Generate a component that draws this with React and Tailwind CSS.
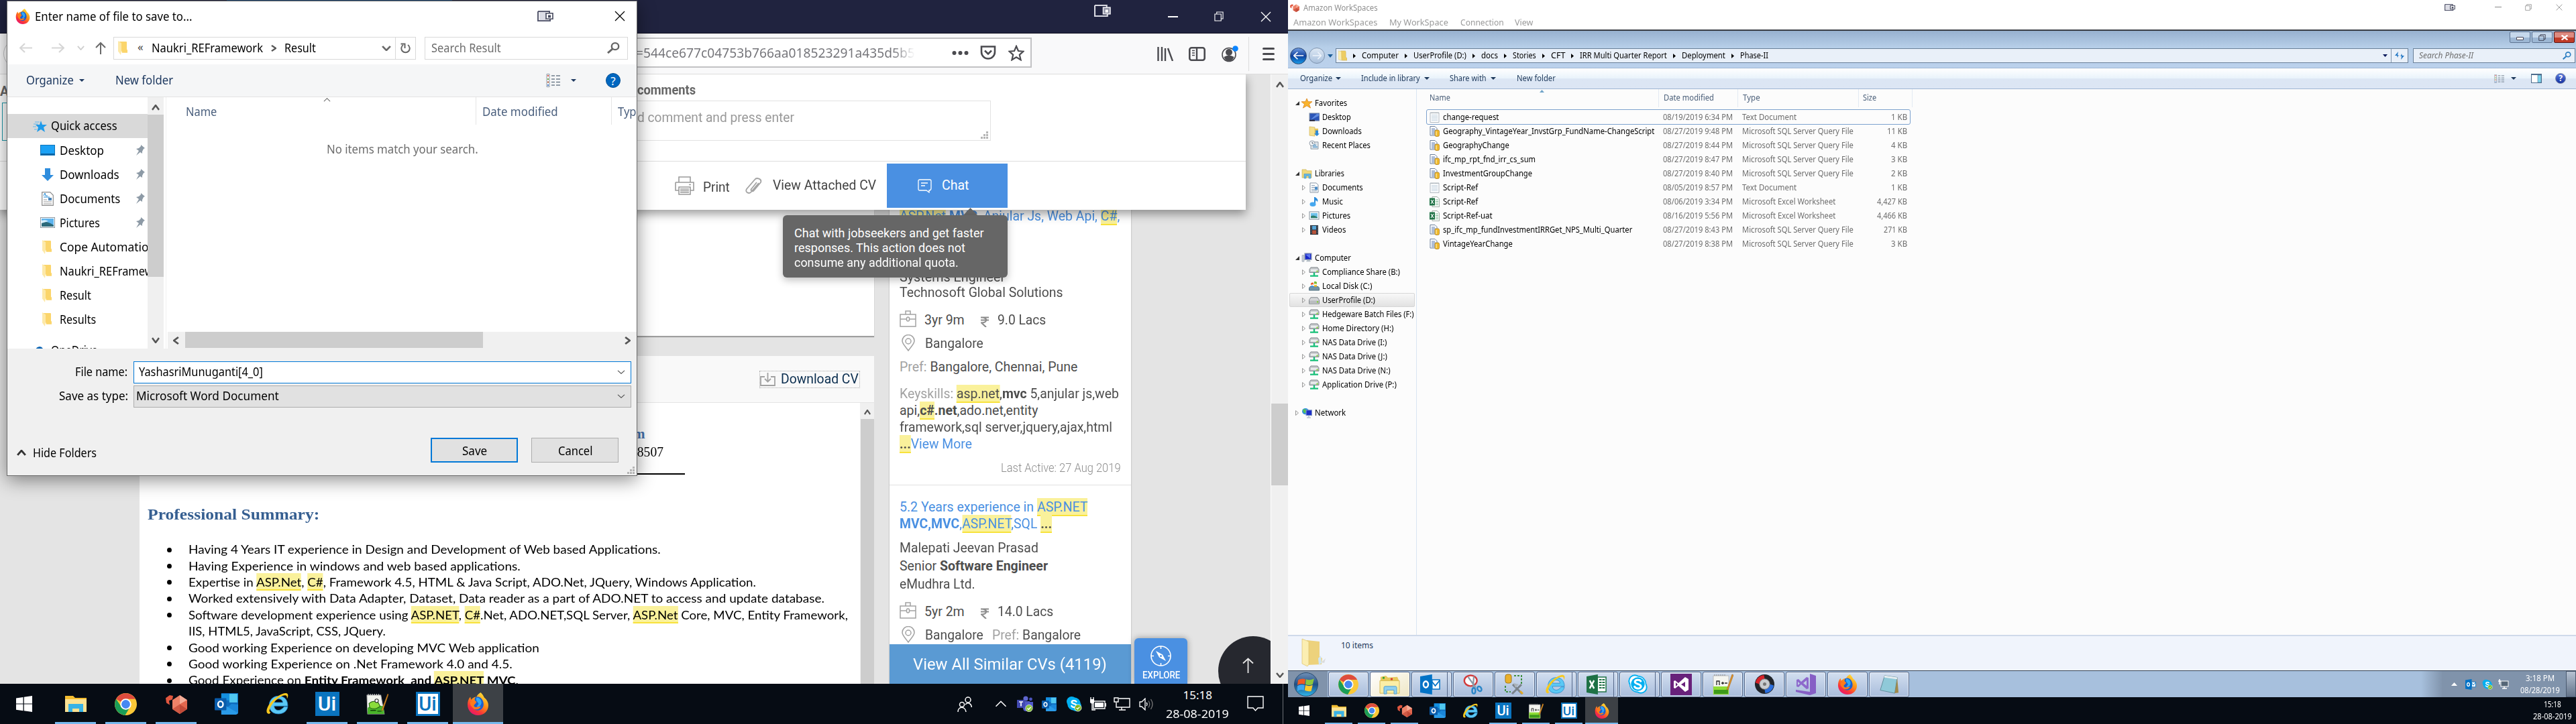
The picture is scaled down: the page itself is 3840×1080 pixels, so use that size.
import { useLayoutEffect, useRef, useState } from "react";

const SEGOE = "font-['Noto_Sans','Open_Sans',sans-serif]";
const ROBOTO = "font-['Roboto',sans-serif]";

/* Text that is condensed or widened to fill a known width. */
function Fit({ w, className = "", origin = "origin-left", children }) {
  const ref = useRef(null);
  const [k, setK] = useState(1);
  useLayoutEffect(() => {
    if (ref.current.offsetWidth) setK(w / ref.current.offsetWidth);
  }, [w, children]);
  return (
    <span className={`block shrink-0 whitespace-nowrap ${className}`} style={{ width: w }}>
      <span ref={ref} className={`inline-block whitespace-pre ${origin}`} style={{ transform: `scaleX(${k})` }}>
        {children}
      </span>
    </span>
  );
}

/* ---------- icons ---------- */
const Svg = ({ c, vb = "0 0 24 24", children }) => (
  <svg viewBox={vb} preserveAspectRatio="none" className={`block shrink-0 ${c}`} fill="none">
    {children}
  </svg>
);
const Firefox = ({ c }) => (
  <Svg c={c} vb="0 0 32 32">
    <defs>
      <linearGradient id="ffx" x1="0.8" y1="0" x2="0.2" y2="1">
        <stop offset="0" stopColor="#ffe83b" />
        <stop offset="0.45" stopColor="#ff8a16" />
        <stop offset="0.75" stopColor="#f8333a" />
        <stop offset="1" stopColor="#e3127a" />
      </linearGradient>
    </defs>
    <path d="M20 0c3 3 4 5 5 7 4 3 6 7 6 11 0 8-7 14-15 14S1 26 1 17c0-4 1-8 4-11l1 4c3-3 5-4 8-4 1-3 4-5 6-6z" fill="url(#ffx)" />
    <path d="M12 7c5-3 11 1 12 8s-5 11-10 10-7-6-4-9c1-1 4-1 4-3-2-1-4-3-2-6z" fill="#1a5fd0" />
    <path d="M14 7c4 0 7 3 7 7s-4 7-7 6l3-4c-1-3-5-4-3-9z" fill="#2fa8f5" />
    <path d="M5 13c3-1 6 0 8 2-2 2-4 3-2 5 3 2 6-1 9 0-2 4-8 5-11 2S4 17 5 13z" fill="#ff7a1a" />
  </Svg>
);
const Chrome = ({ c }) => (
  <Svg c={c} vb="0 0 32 32">
    <circle cx="16" cy="16" r="16" fill="#fbc837" />
    <path d="M2 8.5A16 16 0 0 1 30 8.5H16a8 8 0 0 0-7 4z" fill="#dd4b3e" />
    <path d="M2 8.5a16 16 0 0 0 13 23.4L22 20a8 8 0 0 1-13-1z" fill="#1a9d58" />
    <circle cx="16" cy="16" r="8" fill="#fff" />
    <circle cx="16" cy="16" r="6.2" fill="#4688f1" />
  </Svg>
);
const Explorer = ({ c }) => (
  <Svg c={c} vb="0 0 32 26">
    <path d="M0 1h12l3 3h17v20H0z" fill="#f3bd30" />
    <path d="M0 6h32v19H0z" fill="#fde293" />
    <path d="M5 25V13h22v12h-6v-5H11v5z" fill="#39b2e6" />
  </Svg>
);
const Explorer7 = ({ c }) => (
  <Svg c={c} vb="0 0 32 32">
    <path d="M2 4l8-2 3 3 14-1 2 5v20H2z" fill="#e8c95c" />
    <path d="M1 10h29v20H1z" fill="#fbeea6" stroke="#d6b851" />
    <path d="M7 31V21q0-2 2-2h15q2 0 2 2v10h-4v-6H11v6z" fill="#8fd0ef" stroke="#559fc9" />
    <rect x="5" y="4" width="3" height="3" fill="#35a335" />
    <rect x="17" y="6" width="3" height="3" fill="#d33" />
  </Svg>
);
const Cubes = ({ c }) => (
  <Svg c={c} vb="0 0 32 28">
    <path d="M0 5l6-4 5 1-1 5-5 2 1 6-5-3z" fill="#e2573f" />
    <path d="M21 1l11 7v13l-11 7-11-7V8z" fill="#ee8268" />
    <path d="M21 1l11 7-11 6z" fill="#f4ad98" />
    <path d="M21 14l11-6v13z" fill="#e2674e" />
    <path d="M21 14v14l-11-7z" fill="#d05a45" />
    <path d="M21 14l11 7-11 7z" fill="#c14a38" />
  </Svg>
);
const Outlook = ({ c }) => (
  <Svg c={c} vb="0 0 32 30">
    <path d="M9 0h23v26q0 3-3 3H9z" fill="#0f6cbd" />
    <path d="M9 1h11v9H9z" fill="#1490df" />
    <path d="M20 1h11v12H20z" fill="#50c8f0" />
    <path d="M9 27l14-12 9 1v12z" fill="#1a86d9" />
    <path d="M9 14l23 14q-1 2-3 2H9z" fill="#2a9be8" />
    <rect x="0" y="7" width="16" height="17" rx="1" fill="#0a5cab" />
    <ellipse cx="8" cy="15.5" rx="3.4" ry="4.2" stroke="#fff" strokeWidth="2.2" />
  </Svg>
);
const Outlook13 = ({ c }) => (
  <Svg c={c} vb="0 0 32 30">
    <path d="M0 3l19-3v30L0 27z" fill="#0072c6" />
    <ellipse cx="9" cy="15" rx="3.8" ry="4.6" stroke="#fff" strokeWidth="2.6" />
    <path d="M19 8h12v14H19z" fill="#fff" stroke="#0072c6" strokeWidth="1.6" />
    <path d="M19 11l5 6 7-8" stroke="#0072c6" strokeWidth="1.8" />
  </Svg>
);
const IE = ({ c }) => (
  <Svg c={c} vb="0 0 32 32">
    <path d="M26 20h5c-1 6-6 10-13 10C10 30 5 25 5 18S10 5 18 5c8 0 13 5 13 14H12c0 4 3 6 6 6s5-2 8-5zM12 14h12c0-3-3-5-6-5s-5 2-6 5z" fill="#5ac8f5" stroke="#2585c9" strokeWidth="0.8" />
    <path d="M5 30c-6 0-4-9 2-16S24 0 29 1c4 1 2 6 1 8 0-3 0-5-3-5-5 0-13 6-18 13-4 6-5 10-2 11z" fill="#f7c81e" />
  </Svg>
);
const Npp = ({ c }) => (
  <Svg c={c} vb="0 0 32 32">
    <path d="M2 3h23v28H2z" fill="#f5f5f0" stroke="#bbb" />
    <path d="M2 19h23v12H2z" fill="#8fdc35" />
    <path d="M3 24h21v6H3z" fill="#3d9a1b" />
    <path d="M4 3v-2m3 2v-2m3 2v-2m3 2v-2m3 2v-2m3 2v-2" stroke="#888" />
    <path d="M7 17v-6h4v6m3-3h4m-2-2v4m3-2h4" stroke="#222" strokeWidth="1.3" />
    <path d="M22 24L30 1l2 1-8 22z" fill="#e59a2c" stroke="#9a5b12" strokeWidth="0.6" />
  </Svg>
);
const NppFrog = ({ c }) => (
  <Svg c={c} vb="0 0 32 32">
    <path d="M1 3h20l5 27H2z" fill="#f2f4ee" stroke="#bbb" />
    <path d="M3 3v-2m3 2v-2m3 2v-2m3 2v-2m3 2v-2m3 2v-2" stroke="#ccc" />
    <path d="M2 21q10-5 23-2l1 11H2z" fill="#49b32a" />
    <path d="M4 15q5-5 13-2l3 6q-8 6-15 2z" fill="#8bdc3c" stroke="#215d10" />
    <circle cx="15" cy="11" r="2.5" fill="#fff" stroke="#222" />
    <path d="M6 25h8m2 1h6" stroke="#144408" strokeWidth="1.3" />
    <path d="M22 25L31 1l1 1-8 23z" fill="#e59a2c" stroke="#9a5b12" strokeWidth="0.6" />
  </Svg>
);
const WinLogo = ({ c }) => (
  <Svg c={c}>
    <path d="M0 3.4l10.5-1.5v9.6H0zM11.8 1.7L24 0v11.5H11.8zM0 12.6h10.5v9.6L0 20.7zM11.8 12.6H24V24l-12.2-1.7z" fill="#fff" />
  </Svg>
);
const Skype = ({ c, badge, ring }) => (
  <Svg c={c}>
    <circle cx="8.5" cy="8.5" r="7.5" fill="#00aff0" />
    <circle cx="15.500" cy="15.500" r="7.500" fill="#00aff0" />
    <circle cx="12" cy="12" r="9.8" fill="#00aff0" />
    {ring && <><circle cx="8.500" cy="8.500" r="6" fill="#fff" /><circle cx="15.500" cy="15.500" r="6" fill="#fff" /><circle cx="12" cy="12" r="8.600" fill="#fff" /><circle cx="12" cy="12" r="7.900" fill="#00aff0" /></>}
    <path d="M15.4 8.600C14 6.600 8.800 6.600 8.600 9.300c0 3.200 7.200 2 7 5.500-.4 3-6 2.900-7.300.2" stroke="#fff" strokeWidth="2.300" strokeLinecap="round" />
    {badge && <circle cx="18" cy="18" r="5" fill="#7ab51d" stroke="#fff" strokeWidth="0.8" />}
    {badge && <path d="M15.6 18l1.8 1.8 3-3.4" stroke="#fff" strokeWidth="1.3" />}
  </Svg>
);
const Teams = ({ c }) => (
  <Svg c={c}>
    <circle cx="13" cy="4" r="3.6" fill="#5f66cf" />
    <circle cx="20.5" cy="5" r="2.4" fill="#4b53bc" />
    <path d="M9 8h10v10q-1 5-6 5c-3 0-4-3-4-6zM18 9h6v7q-1 3-5 3z" fill="#5059c9" />
    <rect y="6" width="12" height="12" fill="#4149b0" />
    <path d="M3 9h6M6 9v6.5" stroke="#fff" strokeWidth="1.7" />
    <circle cx="18" cy="18.5" r="5.2" fill="#8bc540" stroke="#fff" strokeWidth="0.6" />
    <path d="M15.5 18.6l1.8 1.8 3.3-3.6" stroke="#fff" strokeWidth="1.4" />
  </Svg>
);
const Folder = ({ c }) => (
  <Svg c={c} vb="0 0 14 20">
    <path d="M1 1h11q1 0 1 1v10l1 1v4H6z" fill="#fbd56b" />
    <path d="M0 0l5 3v11l-1 6-3-4-1-1z" fill="#fde9a9" />
  </Svg>
);
const Folder7 = ({ c }) => (
  <Svg c={c} vb="0 0 14 18">
    <path d="M4 1h7q1 0 1 2v9l2 1v4H6z" fill="#edcd63" stroke="#cfa93c" strokeWidth="0.5" />
    <path d="M0 1l5 1v15l-5-2z" fill="#fbeeb0" stroke="#d9bd62" strokeWidth="0.5" />
  </Svg>
);
const Pin = () => (
  <Svg c="w-[15px] h-[16px]" vb="0 0 15 16">
    <path d="M9 0l6 5-2 1-2 4 0 3-3-2-6 5 4-7-4-3 4-1 3-3z" fill="#8d9aa6" />
  </Svg>
);
const Caret = ({ c, d = "down", sw = 2.5 }) => (
  <Svg c={c} vb="0 0 12 8">
    <path d={d === "down" ? "M1 1l5 6 5-6" : "M1 7l5-6 5 6"} stroke="currentColor" strokeWidth={sw} />
  </Svg>
);
const SideCaret = ({ c, d = "right", sw = 2.5 }) => (
  <Svg c={c} vb="0 0 8 12">
    <path d={d === "right" ? "M1 1l6 5-6 5" : "M7 1L1 6l6 5"} stroke="currentColor" strokeWidth={sw} />
  </Svg>
);
const Tri = ({ c, d = "down" }) => (
  <Svg c={c} vb="0 0 10 10">
    <path d={d === "down" ? "M0 0h10L5 10z" : d === "up" ? "M0 10h10L5 0z" : "M0 0l10 5-10 5z"} fill="currentColor" />
  </Svg>
);
const Screens = ({ c, dark }) => (
  <Svg c={c} vb="0 0 24 17">
    <path d="M1 1h17v4M1 1v15h18v-3" stroke={dark ? "#55586e" : "#d9dae2"} strokeWidth="2" />
    {dark && <path d="M3 2h10v13H3z" fill="#dcdde6" />}
    <rect x="13" y="4" width="10" height="9" fill={dark ? "#fff" : "#8e90a2"} stroke={dark ? "#44475c" : "#e8e8ee"} strokeWidth="1.6" />
    <rect x="16" y="7" width="4" height="4" fill={dark ? "#44475c" : "#fff"} />
  </Svg>
);
const Cross = ({ c, sw = 1.4 }) => (
  <Svg c={c} vb="0 0 16 16">
    <path d="M1 1l14 14M15 1L1 15" stroke="currentColor" strokeWidth={sw} />
  </Svg>
);
const Restore = ({ c }) => (
  <Svg c={c} vb="0 0 15 15">
    <path d="M1 4h10v10H1zM4 4V1h10v10h-3" stroke="currentColor" strokeWidth="1.2" />
  </Svg>
);
const Arrow = ({ c, r = "" }) => (
  <Svg c={`${c} ${r}`} vb="0 0 20 16">
    <path d="M19 8H1M8 1L1 8l7 7" stroke="currentColor" strokeWidth="2.2" />
  </Svg>
);
const Magnifier = ({ c }) => (
  <Svg c={c} vb="0 0 19 18">
    <circle cx="12" cy="6.5" r="5.2" stroke="currentColor" strokeWidth="2.4" />
    <path d="M8 10.5L1 17" stroke="currentColor" strokeWidth="3" />
  </Svg>
);
const ListIcon = ({ c }) => (
  <Svg c={c} vb="0 0 21 20">
    <path d="M1 .5h4v19H1z" fill="#fff" stroke="#8a98a5" />
    <path d="M8 3h5m2 0h6M8 8h5m2 0h6M8 12.500h5m2 0h6M8 17h5m2 0h6" stroke="#6f7e8c" strokeWidth="1.4" />
    <path d="M2 3h2" stroke="#e2574c" strokeWidth="2" />
    <path d="M2 8h2" stroke="#6aaa3e" strokeWidth="2" />
    <path d="M2 12.500h2" stroke="#b53" strokeWidth="2" />
    <path d="M2 17h2" stroke="#47c" strokeWidth="2" />
  </Svg>
);
const Grip = ({ c }) => (
  <Svg c={c} vb="0 0 11 11">
    <path d="M8 0h3v3H8zM4 4h3v3H4zM8 4h3v3H8zM0 8h3v3H0zM4 8h3v3H4zM8 8h3v3H8z" fill="#b5b5b5" />
  </Svg>
);
const Briefcase = () => (
  <Svg c="w-[25px] h-[25px] -mt-[5px]" vb="0 0 25 25">
    <path d="M1 6h23v18H1zM1 13h23M9 6V1h7v5" stroke="#a2a2a2" strokeWidth="1.5" />
    <rect x="10.500" y="10" width="4" height="6" rx="2" fill="#fff" stroke="#a2a2a2" strokeWidth="1.5" />
  </Svg>
);
const MapPin = () => (
  <Svg c="w-[20px] h-[25px] -mt-[3px]" vb="0 0 20 25">
    <path d="M10 24C6 18 1 14 1 9.500a9 9 0 0 1 18 0C19 14 14 18 10 24z" stroke="#a2a2a2" strokeWidth="1.500" />
    <circle cx="10" cy="10" r="4" stroke="#a2a2a2" strokeWidth="1.500" />
  </Svg>
);
const Rupee = () => (
  <Svg c="w-[12px] h-[16px] mt-[3px]" vb="0 0 12 16">
    <path d="M0 1.500h12M0 5.500h12M1 1.500c10 0 9 8 0 8l7 6.500" stroke="#8c8c8c" strokeWidth="2.200" />
  </Svg>
);

const UiTile = ({ c, light }) => (
  <div className={`flex shrink-0 items-center justify-center font-['Roboto'] font-medium leading-none ${light ? "border-[#0a74bf] bg-white text-[#0a74bf]" : "border-[#0a74bf] bg-[#0a74bf] text-white"} ${c}`}>
    Ui
  </div>
);

/* ---------- save dialog ---------- */
const quick = [
  ["Desktop", 66, "desktop"], ["Downloads", 89, "down"], ["Documents", 90, "doc"], ["Pictures", 60, "pic"],
  ["Cope Automation", 143], ["Naukri_REFramework", 165], ["Result", 47], ["Results", 54],
];
function QuickIcon({ kind }) {
  if (kind === "desktop") return <Svg c="w-[22px] h-[16px]" vb="0 0 22 16"><rect x=".5" y=".5" width="21" height="15" fill="#1ba1f5" stroke="#0f74b8" /><path d="M1 14h20" stroke="#0b4f86" strokeWidth="1.500" /></Svg>;
  if (kind === "down") return <Svg c="w-[18px] h-[19px] ml-[2px] mr-[2px]" vb="0 0 18 19"><path d="M5 0h8v10h5l-9 9-9-9h5z" fill="#2f8ddd" /></Svg>;
  if (kind === "doc") return <Svg c="w-[18px] h-[21px] ml-[2px] mr-[2px]" vb="0 0 18 21"><path d="M.7.7h12l4.600 4.600v15H.7z" fill="#fff" stroke="#8b8b8b" strokeWidth="1.200" /><path d="M3 6l2-4 1 4h3M3 8h9" stroke="#2089d5" /><path d="M3 12h5m-5 3h12m-12 3h12" stroke="#9a9a9a" /><rect x="10" y="9" width="5" height="4" fill="#4a84b8" /></Svg>;
  if (kind === "pic") return <Svg c="w-[22px] h-[16px]" vb="0 0 22 16"><rect x=".5" y=".5" width="21" height="15" fill="#fff" stroke="#8d99a3" /><path d="M2 2h18v12H2z" fill="#5eb4ee" /><path d="M2 8q8-3 18 4v2H2z" fill="#2d6a7a" /><path d="M2 5q6-2 10 1l-10 3z" fill="#d6effc" /></Svg>;
  return <Folder c="w-[14px] h-[21px] ml-[3px] mr-[5px]" />;
}

function Dialog() {
  return (
    <div className={`absolute left-[10px] top-[1px] z-20 flex h-[709px] w-[940px] flex-col border border-[#6a6a6a] bg-white text-[17.500px] leading-none text-black shadow-[0_6px_26px_rgba(0,0,0,0.45)] ${SEGOE}`}>
      <div className="flex h-[44px] shrink-0 items-center">
        <Firefox c="ml-[12px] h-[23px] w-[22px]" />
        <Fit w={235} className="mt-[1px] ml-[7px]">Enter name of file to save to...</Fit>
        <Screens dark c="ml-[514px] h-[16px] w-[24px]" />
        <Cross c="ml-[91px] h-[16px] w-[16px]" sw={1.300} />
      </div>
      <div className="flex h-[50px] shrink-0 items-center pt-[1px]">
        <Arrow c="ml-[18px] h-[15px] w-[20px] text-[#d6d6d6]" />
        <Arrow c="ml-[27px] h-[15px] w-[20px] text-[#d6d6d6]" r="rotate-180" />
        <Caret c="ml-[19px] h-[7px] w-[11px] text-[#cfcfcf]" sw={2} />
        <Svg c="ml-[16px] h-[19px] w-[16px]" vb="0 0 16 19"><path d="M8 19V2M1 9l7-7 7 7" stroke="#6a6a6a" strokeWidth="2" /></Svg>
        <div className="ml-[11px] flex h-[34px] w-[451px] shrink-0 items-center border border-[#d9d9d9]">
          <Folder c="ml-[6px] h-[21px] w-[14px]" />
          <span className="ml-[15px] w-[21px] pb-[4px] text-[17px] text-[#444]">«</span>
          <Fit w={166}>Naukri_REFramework</Fit>
          <SideCaret c="ml-[12px] h-[10px] w-[8px] text-[#555]" />
          <Fit w={47} className="ml-[12px]">Result</Fit>
          <Caret c="ml-[98px] h-[8px] w-[14px] text-[#6a6a6a]" sw={2.500} />
          <div className="ml-[6px] flex h-[32px] w-[28px] items-center justify-center border-l border-[#d9d9d9]">
            <Svg c="h-[16px] w-[16px]" vb="0 0 16 16"><path d="M12 3a6.200 6.200 0 1 1-7 0" stroke="#666" strokeWidth="2" /><path d="M1.500 1.500h6V8" stroke="#666" strokeWidth="2" /></Svg>
          </div>
        </div>
        <div className="ml-[13px] flex h-[34px] w-[303px] shrink-0 items-center border border-[#d9d9d9] text-[#6d6d6d]">
          <Fit w={104} className="ml-[9px]">Search Result</Fit>
          <Magnifier c="ml-[158px] h-[17px] w-[19px] text-[#666]" />
        </div>
      </div>
      <div className="flex h-[49px] shrink-0 items-center border-b border-[#e3e3e3] bg-[#f5f6f7] text-[#1e3960]">
        <Fit w={71} className="ml-[28px]">Organize</Fit>
        <Tri c="ml-[8px] h-[4px] w-[8px]" />
        <Fit w={86} className="ml-[46px]">New folder</Fit>
        <ListIcon c="ml-[556px] h-[20px] w-[21px]" />
        <Tri c="ml-[16px] h-[4px] w-[8px]" />
        <div className="ml-[44px] flex h-[22px] w-[22px] shrink-0 items-center justify-center rounded-full border border-[#004f94] bg-[#0067c0] text-[17px] text-white">?</div>
      </div>
      <div className="flex h-[375px] shrink-0">
        <div className="h-full w-[209px] shrink-0 overflow-hidden pt-[25px]">
          <div className="flex h-[36px] items-center bg-[#d9d9d9]">
            <Svg c="ml-[38px] h-[17px] w-[21px]" vb="0 0 21 17"><path d="M12 0l2 6h7l-5 4 2 7-6-4-6 4 2-7-4-4h6z" fill="#1f9bea" /><path d="M3 2h7M1 5h7M0 9h5M2 13h4" stroke="#5fb7ee" /></Svg>
            <Fit w={99} className="ml-[6px]">Quick access</Fit>
          </div>
          {quick.map(([t, w, kind]) => (
            <div key={t} className="flex h-[36px] items-center overflow-hidden">
              <div className="ml-[49px] w-[22px] shrink-0"><QuickIcon kind={kind} /></div>
              <Fit w={w} className="mt-[1px] ml-[7px]">{t}</Fit>
              {kind && <div className="-mr-4 ml-auto flex w-[35px] shrink-0 justify-start"><Pin /></div>}
            </div>
          ))}
          <div className="mt-[11px] flex h-[36px] items-center">
            <Svg c="ml-[38px] h-[14px] w-[22px]" vb="0 0 22 14"><path d="M3 13a4 4 0 0 1 1-7 6 6 0 0 1 11-2 5 5 0 0 1 3 9z" fill="#0a64b4" /></Svg>
            <Fit w={70} className="ml-[5px]">OneDrive</Fit>
          </div>
        </div>
        <div className="flex h-full w-[24px] shrink-0 flex-col items-center bg-[#f0f0f0] text-[#555]">
          <div className="flex h-[26px] items-center pt-[4px]"><Caret c="h-[9px] w-[12px]" d="up" /></div>
          <div className="h-[242px] w-[24px] bg-[#cdcdcd]" />
          <div className="mt-auto flex h-[26px] items-center"><Caret c="h-[9px] w-[12px]" /></div>
        </div>
        <div className="ml-[3px] flex min-w-0 flex-1 flex-col border-l border-[#f0f0f0]">
          <div className="relative flex h-[41px] shrink-0 items-center overflow-hidden text-[#4a5f7d]">
            <Caret c="absolute left-[234px] top-[1px] h-[6px] w-[11px] text-[#666]" d="up" sw={1.300} />
            <Fit w={46} className="ml-[29px] pt-[3px]">Name</Fit>
            <div className="ml-[386px] h-full w-px shrink-0 bg-[#e5e5e5]" />
            <Fit w={113} className="ml-[9px] pt-[3px]">Date modified</Fit>
            <div className="ml-[79px] h-full w-px shrink-0 bg-[#e5e5e5]" />
            <Fit w={37} className="ml-[9px] pt-[3px]">Type</Fit>
          </div>
          <Fit w={226} className="mt-[28px] ml-[239px] text-[#6d6d6d]">No items match your search.</Fit>
          <div className="mt-auto ml-[2px] flex h-[25px] items-center bg-[#f0f0f0] text-[#555]">
            <SideCaret c="ml-[8px] h-[12px] w-[9px]" d="left" />
            <div className="ml-[9px] h-[24px] w-[444px] self-start bg-[#cdcdcd]" />
            <SideCaret c="ml-auto mr-[9px] h-[12px] w-[9px]" />
          </div>
        </div>
      </div>
      <div className="flex flex-1 flex-col bg-[#f0f0f0]">
        <div className="mt-[18px] flex h-[34px] items-center">
          <Fit w={78} className="ml-[101px]">File name:</Fit>
          <div className="ml-[9px] flex h-[33px] w-[742px] shrink-0 items-center border-[1.500px] border-[#0078d7] bg-white">
            <Fit w={185} className="ml-[7px]">YashasriMunuganti[4_0]</Fit>
            <Caret c="mr-[8px] ml-auto h-[6px] w-[12px] text-[#555]" sw={1.400} />
          </div>
        </div>
        <div className="mt-[2px] flex h-[34px] items-center">
          <Fit w={103} className="ml-[77px]">Save as type:</Fit>
          <div className="ml-[8px] flex h-[33px] w-[742px] shrink-0 items-center border border-[#adadad] bg-[#e1e1e1]">
            <Fit w={213} className="ml-[3px]">Microsoft Word Document</Fit>
            <Caret c="mr-[8px] ml-auto h-[6px] w-[12px] text-[#555]" sw={1.400} />
          </div>
        </div>
        <div className="mt-[45px] flex h-[37px] items-center">
          <Caret c="mt-[8px] ml-[14px] h-[9px] w-[14px] text-[#333]" d="up" />
          <Fit w={95} className="mt-[9px] ml-[10px]">Hide Folders</Fit>
          <div className="ml-[498px] flex h-[37px] w-[130px] shrink-0 items-center justify-center border-2 border-[#0078d7] bg-[#e1e1e1] pt-[2px]"><Fit w={37}>Save</Fit></div>
          <div className="ml-[20px] flex h-[37px] w-[130px] shrink-0 items-center justify-center border border-[#adadad] bg-[#e1e1e1] pt-[2px]"><Fit w={51}>Cancel</Fit></div>
        </div>
        <div className="mt-auto mb-[2px] ml-auto mr-[3px]"><Grip c="h-[11px] w-[11px]" /></div>
      </div>
    </div>
  );
}

/* ---------- browser ---------- */
const Hl = ({ children }) => <mark className="border-b-2 border-[#f8e23b] bg-[#faf19b] pt-[2px] text-inherit">{children}</mark>;
const Line = ({ h = "h-[25px]", children, className = "" }) => <div className={`flex shrink-0 items-center ${h} ${className}`}>{children}</div>;

function ScrollV({ thumb }) {
  return (
    <div className="flex w-[26px] shrink-0 flex-col items-center border-l border-white bg-[#f0f0f0] text-[#555]">
      <div className="flex h-[31px] items-center"><Caret c="h-[9px] w-[12px]" d="up" /></div>
      <div className={thumb} />
      <div className="mt-auto flex h-[26px] items-center"><Caret c="h-[8px] w-[12px]" /></div>
    </div>
  );
}

function FirefoxChrome() {
  return (
    <>
      <div className="flex h-[50px] shrink-0 items-center border-b border-[#0c0c1e] bg-[#20233f] text-white">
        <div className="ml-[338px] h-[2px] w-[336px] shrink-0 self-start bg-[#1c4577]" />
        <Screens c="mb-[18px] ml-[957px] h-[18px] w-[25px]" />
        <div className="ml-[85px] h-[2px] w-[15px] shrink-0 bg-white" />
        <Restore c="ml-[54px] h-[15px] w-[14px]" />
        <Cross c="ml-[55px] h-[16px] w-[16px]" />
      </div>
      <div className={`flex h-[61px] shrink-0 items-center border-b border-[#dcdcdc] bg-[#f9f9fa] text-[#4a4a4f] ${SEGOE}`}>
        <div className="ml-[5px] h-[42px] w-[42px] shrink-0 rounded-full border border-[#c4c4c6] bg-white" />
        <div className="mt-[-3px] ml-[703px] flex h-[45px] w-[788px] shrink-0 items-center border-2 border-[#c2c2c4] bg-white">
          <Fit w={416} className="ml-[196px] text-[20px] leading-none"><span className="bg-gradient-to-r from-[#737378] from-92% to-white bg-clip-text py-1 text-transparent">=544ce677c04753b766aa018523291a435d5b5</span></Fit>
          <Svg c="ml-[55px] h-[6px] w-[25px]" vb="0 0 25 6"><circle cx="3.500" cy="3" r="3" fill="#4a4a4f" /><circle cx="12.500" cy="3" r="3" fill="#4a4a4f" /><circle cx="21.500" cy="3" r="3" fill="#4a4a4f" /></Svg>
          <Svg c="ml-[17px] h-[21px] w-[24px]" vb="0 0 24 21"><path d="M2 1.500h20v8a10 10 0 0 1-20 0z" stroke="#4a4a4f" strokeWidth="2.600" /><path d="M7 7.500l5 5 5-5" stroke="#4a4a4f" strokeWidth="2.600" /></Svg>
          <Svg c="ml-[18px] h-[24px] w-[24px]"><path d="M12 2l3 7 7.500.7-5.700 5 1.800 7.600L12 18.300l-6.600 4 1.800-7.600-5.700-5L9 9z" stroke="#4a4a4f" strokeWidth="2.200" /></Svg>
        </div>
        <Svg c="ml-[187px] h-[21px] w-[24px]" vb="0 0 24 21"><path d="M1.500 0v21M7 0v21M12 2v19M16 2l7 19" stroke="#4a4a4f" strokeWidth="2.400" /></Svg>
        <Svg c="ml-[23px] h-[21px] w-[25px]" vb="0 0 25 21"><rect x="1.300" y="1.300" width="22.400" height="18.400" rx="3" stroke="#4a4a4f" strokeWidth="2.600" /><path d="M12 1v19" stroke="#4a4a4f" strokeWidth="2.400" /><path d="M5 5.500h4M5 9h4M5 12.500h4" stroke="#4a4a4f" strokeWidth="1.500" /></Svg>
        <Svg c="ml-[24px] h-[25px] w-[25px]" vb="0 0 25 25"><circle cx="11" cy="13.500" r="10" stroke="#4a4a4f" strokeWidth="1.600" /><circle cx="11" cy="10" r="5" fill="#4a4a4f" /><path d="M3.500 17q7.500-5 15 0-2 6-7.500 6t-7.500-6z" fill="#4a4a4f" /><circle cx="20.500" cy="4.500" r="4.300" fill="#0a84ff" /></Svg>
        <div className="ml-[15px] h-[51px] w-px bg-[#dcdcdc]" />
        <div className="ml-[20px] flex w-[18px] flex-col gap-[5px]">
          <div className="h-[3px] rounded bg-[#4a4a4f]" /><div className="h-[3px] rounded bg-[#4a4a4f]" /><div className="h-[3px] rounded bg-[#4a4a4f]" />
        </div>
      </div>
    </>
  );
}

function CandidateHeader() {
  return (
    <div className={`relative z-10 flex h-[202px] w-[1857px] shrink-0 flex-col bg-white leading-none text-[#444] shadow-[0_6px_14px_rgba(0,0,0,0.4)] ${ROBOTO}`}>
      <div className="flex h-[39px] items-end pb-[4px] text-[19.500px] font-bold text-[#666]">
        <span className="w-[950px]">A</span>
        <Fit w={87} className="pb-[2px]">comments</Fit>
      </div>
      <div className="flex h-[60px] shrink-0">
        <div className="mt-[3px] ml-[3px] h-[57px] w-[300px] border border-[#1b9aaa]" />
        <div className="ml-[397px] flex w-[777px] border border-[#e2e2e2] text-[19.500px] text-[#999]">
          <Fit w={234} className="mt-[15px] ml-[249px]">d comment and press enter</Fit>
          <div className="mt-auto mb-[2px] mr-[3px] ml-auto"><Grip c="h-[11px] w-[11px]" /></div>
        </div>
      </div>
      <div className="mt-[30px] flex h-[73px] shrink-0 items-center border-t border-[#dedede] text-[19.500px]">
        <Svg c="ml-[1006px] h-[28px] w-[29px]" vb="0 0 29 28"><path d="M6 9V1h17v8M1 9h27v12h-5M1 9v12h5M6 16h17v11H6z" stroke="#9b9b9b" strokeWidth="1.600" /><path d="M8 19h13M8 21.500h13M8 24h13M21 12.500h3" stroke="#9b9b9b" strokeWidth="1.400" /></Svg>
        <Fit w={40} className="mt-[5px] ml-[13px]">Print</Fit>
        <Svg c="ml-[23px] h-[25px] w-[25px]" vb="0 0 25 25"><path d="M20 8L9 21c-3 4-10 1-7-4L14 3c3-4 11-1 9 4L13 19c-2 3-6 0-4-2l8-10" stroke="#a3a3a3" strokeWidth="1.800" /></Svg>
        <Fit w={154} className="ml-[16px]">View Attached CV</Fit>
        <div className="relative ml-[16px] flex h-[66px] w-[180px] items-center bg-[#4a90e2] text-white">
          <Svg c="ml-[46px] h-[21px] w-[21px]" vb="0 0 21 21"><path d="M3 1h15q2 0 2 2v11q0 3-3 3v3l-4-3H3q-2 0-2-2V3q0-2 2-2z" stroke="#fff" strokeWidth="1.300" /><path d="M5 6h10M5 10h6" stroke="#fff" strokeWidth="1.300" /></Svg>
          <Fit w={40} className="ml-[15px]">Chat</Fit>
          <div className="absolute top-full right-0 flex w-[335px] flex-col items-end">
            <Tri c="mr-[45px] h-[11px] w-[21px] text-[#666]" d="up" />
            <div className="flex h-[93px] w-[335px] flex-col rounded-[6px] bg-[#666] pt-[16px] pl-[17px] text-[18px] leading-[22px] shadow-[0_4px_12px_rgba(0,0,0,0.25)]">
              <Fit w={283}>Chat with jobseekers and get faster</Fit>
              <Fit w={255}>responses. This action does not</Fit>
              <Fit w={245}>consume any additional quota.</Fit>
            </div>
          </div>
        </div>
      </div>
    </div>
  );
}

const bullets = [
  [704, "Having 4 Years IT experience in Design and Development of Web based Applications."],
  [495, "Having Experience in windows and web based applications."],
  [846, <>Expertise in <Hl>ASP.Net</Hl>, <Hl>C#</Hl>, Framework 4.5, HTML &amp; Java Script, ADO.Net, JQuery, Windows Application.</>],
  [948, "Worked extensively with Data Adapter, Dataset, Data reader as a part of ADO.NET to access and update database."],
  [983, <>Software development experience using <Hl>ASP.NET</Hl>, <Hl>C#</Hl>.Net, ADO.NET,SQL Server, <Hl>ASP.Net</Hl> Core, MVC, Entity Framework,</>],
  [294, "IIS, HTML5, JavaScript, CSS, JQuery.", true],
  [523, "Good working Experience on developing MVC Web application"],
  [483, "Good working Experience on .Net Framework 4.0 and 4.5."],
  [492, <>Good Experience on <b>Entity Framework  and <Hl>ASP.NET</Hl> MVC</b>.</>],
];

function Document() {
  return (
    <div className="ml-[208px] flex w-[1095px] shrink-0 flex-col">
      <div className="h-[188px] shrink-0 bg-white shadow-[0_2px_1px_rgba(0,0,0,0.3)]" />
      <div className={`mt-[30px] flex h-[70px] shrink-0 items-center border-b border-[#e4e4e4] bg-[#f9f9f9] ${ROBOTO}`}>
        <div className="ml-[924px] flex h-[26px] w-[150px] items-center border border-dotted border-[#aaa] text-[19.500px] leading-none text-[#0b2e4f]">
          <Svg c="h-[20px] w-[23px]" vb="0 0 23 20"><path d="M7 6H1v13h21V6h-6M11.500 0v13M7 9l4.500 4.500L16 9" stroke="#a2a2a2" strokeWidth="1.800" /></Svg>
          <Fit w={116} className="ml-[8px]">Download CV</Fit>
        </div>
      </div>
      <div className="flex h-[419px] shrink-0 bg-white">
        <div className="flex w-[1074px] flex-col overflow-hidden font-['Lato',sans-serif] leading-none text-black">
          <div className="mt-[36px] ml-[736px] h-[27px] shrink-0 font-['Liberation_Serif',serif] text-[21px] font-bold text-[#4472ae]">m</div>
          <div className="ml-[732px] h-[27px] shrink-0 font-['Liberation_Serif',serif] text-[20px]"><Fit w={49}>88507</Fit></div>
          <div className="mt-[15px] h-[2px] w-[813px] shrink-0 bg-black" />
          <Fit w={256} className="mt-[47px] ml-[12px] h-[48px] font-['Liberation_Serif',serif] text-[24px] font-bold text-[#365f91]">Professional Summary:</Fit>
          <div className="mt-[5px] flex shrink-0 flex-col text-[17.800px]">
            {bullets.map(([w, t, cont], i) => (
              <div key={i} className="flex h-[24.400px] shrink-0 items-center">
                <div className={`mr-[25px] ml-[41px] size-[7px] shrink-0 rounded-full ${cont ? "" : "bg-black"}`} />
                <Fit w={w}>{t}</Fit>
              </div>
            ))}
          </div>
        </div>
        <div className="flex w-[21px] shrink-0 flex-col items-center bg-[#f0f0f0] text-[#555]">
          <div className="flex h-[24px] items-center pt-[3px]"><Caret c="h-[8px] w-[10px]" d="up" /></div>
          <div className="w-[20px] flex-1 bg-[#cdcdcd]" />
        </div>
      </div>
    </div>
  );
}

function Similar() {
  return (
    <div className={`ml-[23px] flex w-[360px] shrink-0 flex-col bg-white leading-none text-[#4d4d4d] shadow-[0_0_2px_rgba(0,0,0,0.3)] ${ROBOTO}`}>
      <div className="flex h-[648px] shrink-0 flex-col overflow-hidden text-[19.500px]">
        <Line className="-mt-[3px] pl-[15px] text-[#4a90e2]"><Fit w={328}><Hl>ASP.Net</Hl> <b>MVC</b>, Anjular Js, Web Api, <Hl>C#</Hl>,</Fit></Line>
        <Line h="h-[27px]" className="mt-[65px] pl-[15px]"><Fit w={157}>Systems Engineer</Fit></Line>
        <Line h="h-[19px]" className="pl-[15px]"><Fit w={244}>Technosoft Global Solutions</Fit></Line>
        <Line h="h-[36px]" className="mt-[14px] pl-[15px]">
          <Briefcase /><Fit w={60} className="ml-[12px]">3yr 9m</Fit><span className="w-[24px]" /><Rupee /><Fit w={72} className="ml-[13px]">9.0 Lacs</Fit>
        </Line>
        <Line h="h-[34px]" className="pl-[18px]"><MapPin /><Fit w={87} className="ml-[15px]">Bangalore</Fit></Line>
        <Line h="h-[36px]" className="pl-[15px]"><Fit w={265}><span className="text-[#a2a2a2]">Pref:</span> Bangalore, Chennai, Pune</Fit></Line>
        <Line className="mt-[9px] pl-[15px]"><Fit w={327}><span className="text-[#a2a2a2]">Keyskills:</span> <Hl>asp.net</Hl>,<b>mvc</b> 5,anjular js,web</Fit></Line>
        <Line className="pl-[15px]"><Fit w={206}>api,<b><Hl>c#</Hl>.net</b>,ado.net,entity</Fit></Line>
        <Line className="pl-[15px]"><Fit w={317}>framework,sql server,jquery,ajax,html</Fit></Line>
        <Line className="pl-[15px]"><Fit w={108}><b><Hl>...</Hl></b><span className="text-[#4a90e2]">View More</span></Fit></Line>
        <Line h="h-[46px]" className="pl-[166px] text-[18px] font-light text-[#8e8e8e]"><Fit w={179}>Last Active: 27 Aug 2019</Fit></Line>
        <div className="mt-[2px] h-px shrink-0 bg-[#e0e0e0]" />
        <Line className="mt-[20px] pl-[15px] text-[#4a90e2]"><Fit w={280}>5.2 Years experience in <Hl>ASP.NET</Hl></Fit></Line>
        <Line className="pl-[15px] text-[#4a90e2]"><Fit w={227}><b>MVC,MVC</b>,<Hl>ASP.NET</Hl>,SQL <b className="text-[#4d4d4d]"><Hl>...</Hl></b></Fit></Line>
        <Line h="h-[27px]" className="mt-[10px] pl-[15px]"><Fit w={207}>Malepati Jeevan Prasad</Fit></Line>
        <Line h="h-[27px]" className="pl-[15px]"><Fit w={221}>Senior <b>Software Engineer</b></Fit></Line>
        <Line h="h-[27px]" className="pl-[15px]"><Fit w={113}>eMudhra Ltd.</Fit></Line>
        <Line h="h-[36px]" className="mt-[10px] pl-[15px]">
          <Briefcase /><Fit w={60} className="ml-[12px]">5yr 2m</Fit><span className="w-[24px]" /><Rupee /><Fit w={83} className="ml-[13px]">14.0 Lacs</Fit>
        </Line>
        <Line h="h-[34px]" className="pl-[18px]"><MapPin /><Fit w={87} className="ml-[15px]">Bangalore</Fit><Fit w={132} className="ml-[13px]"><span className="text-[#a2a2a2]">Pref:</span> Bangalore</Fit></Line>
      </div>
      <div className="flex h-[59px] shrink-0 items-center bg-[#5a9ad3] pl-[35px] text-[24px] text-white"><Fit w={289}>View All Similar CVs (4119)</Fit></div>
    </div>
  );
}

function Tile({ active, line, children, small }) {
  const size = small ? "w-[49px] h-[40px]" : "w-[75px] h-[60px]";
  return (
    <div className={`relative flex shrink-0 items-center justify-center ${size} ${active ? "bg-[#3d4146]" : ""}`}>
      {children}
      {line && <div className={`absolute bottom-0 bg-[#76b9ed] ${active ? "inset-x-0" : small ? "inset-x-[4px]" : "inset-x-[7px]"} ${small ? "h-[2px]" : "h-[3px]"}`} />}
    </div>
  );
}

function Taskbar() {
  return (
    <div className={`flex h-[60px] shrink-0 items-center bg-[#060c14] text-[17px] leading-none text-white ${SEGOE}`}>
      <div className="flex w-[75px] shrink-0 pl-[24px]"><WinLogo c="h-[24px] w-[24px]" /></div>
      <Tile line><Explorer c="h-[26px] w-[32px]" /></Tile>
      <Tile line><Chrome c="h-[33px] w-[33px]" /></Tile>
      <Tile line><Cubes c="h-[29px] w-[32px]" /></Tile>
      <Tile><Outlook c="h-[32px] w-[35px]" /></Tile>
      <Tile><IE c="h-[34px] w-[34px]" /></Tile>
      <Tile line><UiTile c="h-[36px] w-[36px] text-[30px]" /></Tile>
      <Tile line><NppFrog c="h-[33px] w-[33px]" /></Tile>
      <Tile line><UiTile light c="h-[36px] w-[36px] border-[3px] text-[29px]" /></Tile>
      <Tile line active><Firefox c="h-[34px] w-[33px]" /></Tile>
      <Svg c="ml-[677px] h-[23px] w-[22px]" vb="0 0 22 23"><circle cx="16" cy="5" r="4" stroke="#fff" strokeWidth="1.500" /><circle cx="7" cy="12" r="3.500" stroke="#fff" strokeWidth="1.500" /><path d="M1 23c0-9 11-9 12 0M12 12c4-5 9-1 9.500 4" stroke="#fff" strokeWidth="1.500" /></Svg>
      <Caret c="ml-[34px] h-[10px] w-[18px]" d="up" sw={1} />
      <Teams c="ml-[15px] h-[24px] w-[24px]" />
      <Outlook c="ml-[13px] h-[21px] w-[22px]" />
      <Skype badge c="ml-[14px] h-[24px] w-[24px]" />
      <Svg c="ml-[11px] h-[20px] w-[25px]" vb="0 0 25 20"><path d="M6 6h17v11H6z" stroke="#fff" strokeWidth="1.400" /><path d="M8 8h13v7H8zM23 9h2v5h-2zM1 3h6v5q-3 3-6 0z" fill="#fff" /><path d="M2 0v3M6 0v3M4 9v10h5" stroke="#fff" strokeWidth="1.400" /></Svg>
      <Svg c="ml-[11px] h-[20px] w-[25px]" vb="0 0 25 20"><path d="M8 2h16v13H4V8M1 1h6v6H1zM12 15v4M8 19h10" stroke="#fff" strokeWidth="1.400" /></Svg>
      <Svg c="ml-[13px] h-[19px] w-[22px]" vb="0 0 22 19"><path d="M1 6h3l5-5v17l-5-5H1z" stroke="#fff" strokeWidth="1.300" /><path d="M11 7q2 2.500 0 5" stroke="#fff" strokeWidth="1.300" /><path d="M14 4.500q3.500 5 0 10M17.500 2q5 7.500 0 15" stroke="#777" strokeWidth="1.300" /></Svg>
      <div className="ml-[18px] flex h-full w-[94px] shrink-0 flex-col items-center justify-center gap-[11px]">
        <Fit w={43}>15:18</Fit>
        <Fit w={94}>28-08-2019</Fit>
      </div>
      <Svg c="ml-[27px] h-[24px] w-[25px]" vb="0 0 25 24"><path d="M1 1h23v17h-8l-3.500 4-3.500-4H1z" stroke="#fff" strokeWidth="1.400" /></Svg>
      <div className="ml-auto h-full w-[8px] border-l border-[#6c7075]" />
    </div>
  );
}

function LeftScreen() {
  return (
    <div className="relative flex h-[1080px] w-[1920px] shrink-0 flex-col overflow-hidden bg-[#e4e4e4]">
      <FirefoxChrome />
      <div className="flex h-[909px] shrink-0">
        <div className="relative flex w-[1894px] shrink-0 flex-col overflow-hidden">
          <CandidateHeader />
          <div className="flex h-[707px] shrink-0">
            <Document />
            <Similar />
            <div className={`mt-[639px] ml-[5px] flex w-[79px] shrink-0 flex-col items-center rounded-t-[6px] bg-[#4a90e2] pt-[11px] text-[15px] leading-none font-medium text-white shadow-[0_0_10px_rgba(0,0,0,0.35)] ${ROBOTO}`}>
              <Svg c="h-[31px] w-[31px]" vb="0 0 31 31"><circle cx="15.500" cy="15.500" r="14.500" stroke="#fff" strokeWidth="1.600" /><path d="M8 8l10 5.500 5 9.500-10-5.500z" fill="#fff" /><circle cx="15.500" cy="15.500" r="1.500" fill="#4a90e2" /><path d="M15.500 1v4M15.500 26v4M1 15.500h4M26 15.500h4" stroke="#fff" strokeWidth="1.600" /></Svg>
              <Fit w={56} className="mt-[6px]">EXPLORE</Fit>
            </div>
            <div className="mt-[636px] ml-[46px] flex size-[104px] shrink-0 rounded-full bg-[#26282f]">
              <Svg c="mt-[32px] ml-[36px] h-[23px] w-[17px]" vb="0 0 17 23"><path d="M8.500 23V2M1 8.500L8.500 1.500 16 8.500" stroke="#e6e6e6" strokeWidth="1.800" /></Svg>
            </div>
          </div>
        </div>
        <ScrollV thumb="mt-[460px] h-[122px] w-[25px] bg-[#cdcdcd]" />
      </div>
      <Taskbar />
      <Dialog />
    </div>
  );
}

/* ---------- remote desktop ---------- */
const crumbs = [["Computer", 55], ["UserProfile (D:)", 79], ["docs", 25], ["Stories", 35], ["CFT", 21], ["IRR Multi Quarter Report", 130], ["Deployment", 65], ["Phase-II", 42]];

const tree = [
  ["Favorites", 48, "star", 0, 1], ["Desktop", 43, "desk", 1], ["Downloads", 59, "dl", 1], ["Recent Places", 72, "recent", 1], null,
  ["Libraries", 44, "lib", 0, 1], ["Documents", 61, "docs", 2], ["Music", 31, "music", 2], ["Pictures", 42, "pics", 2], ["Videos", 35, "video", 2], null,
  ["Computer", 54, "pc", 0, 1], ["Compliance Share (B:)", 116, "net", 2], ["Local Disk (C:)", 74, "local", 2], ["UserProfile (D:)", 79, "disk", 2], ["Hedgeware Batch Files (F:)", 137, "net", 2], ["Home Directory (H:)", 106, "net", 2], ["NAS Data Drive (I:)", 96, "net", 2], ["NAS Data Drive (J:)", 97, "net", 2], ["NAS Data Drive (N:)", 102, "net", 2], ["Application Drive (P:)", 111, "net", 2], null,
  ["Network", 46, "network", 0, 0],
];
const treeArt = {
  star: <path d="M8 1l2 5h6l-4.500 4 2 6L8 12.500 2.500 16l2-6L0 6h6z" fill="#f9b42d" stroke="#d9821a" strokeWidth="0.8" />,
  desk: <><rect x="1" y="2" width="15" height="12" fill="#2c56b8" stroke="#8b98a8" /><path d="M2 13L12 3h3v3z" fill="#5f8be0" /><path d="M1 13.500h8" stroke="#223" strokeWidth="2" /></>,
  dl: <><path d="M1 1l8 1v14l-8-1z" fill="#f5df8a" stroke="#caa945" strokeWidth="0.600" /><path d="M9 4h5v10H9z" fill="#e6c55a" /><path d="M10 7h4v5h2l-4 4-4-4h2z" fill="#2f8ad6" /></>,
  recent: <><path d="M3 3h11v11H3z" fill="#dfe5ea" stroke="#8d99a5" /><circle cx="5" cy="5" r="4" fill="#f4f6f8" stroke="#8d99a5" /><path d="M5 3v2h2" stroke="#456" /><path d="M6 11h7M6 8h5" stroke="#5a9ccc" strokeWidth="1.600" /></>,
  lib: <><path d="M1 2h6l1 2h7v11H1z" fill="#efd97f" stroke="#c6a944" strokeWidth="0.600" /><path d="M4 16V9h10v7h-3v-4H7v4z" fill="#66b7e6" stroke="#3d8fc0" strokeWidth="0.600" /></>,
  docs: <><path d="M2 1h9l3 3v12H2z" fill="#fff" stroke="#8594a2" /><path d="M4 5h5M4 8h8M4 11h8M4 13.500h8" stroke="#7d95ab" /><rect x="9" y="7" width="4" height="5" fill="#4c8cc6" /></>,
  music: <><path d="M9 1v11" stroke="#2e8ddb" strokeWidth="2" /><path d="M9 1q6 3 4 8-1-3-4-3z" fill="#2e8ddb" /><ellipse cx="6" cy="12.500" rx="4.500" ry="3.500" fill="#46a8ef" /></>,
  pics: <><rect x="1" y="2" width="14" height="12" fill="#fff" stroke="#7f8d9a" /><path d="M3 4h10v8H3z" fill="#6fc1ea" /><path d="M3 9q5-3 10 2v1H3z" fill="#2d7d6b" /></>,
  video: <><rect x="2" y="1" width="12" height="15" fill="#222b35" /><path d="M5 2h6v6H5z" fill="#57a6d8" /><path d="M5 9h6v6H5z" fill="#b8543c" /><path d="M3.500 2v13M12.500 2v13" stroke="#ccd" strokeDasharray="1 1.500" /></>,
  pc: <><rect x="5" y="1" width="10" height="10" fill="#1726c7" stroke="#9aa6b8" strokeWidth="1.300" /><path d="M6 3l7 6V2z" fill="#5f78ee" /><path d="M1 4h3v10H1z" fill="#c9d0d8" stroke="#8995a4" strokeWidth="0.600" /><path d="M7 14h7l-2-3H9z" fill="#b0bac5" /></>,
  net: <><path d="M3 1h10l2 3v5H1V4z" fill="#c4c7ca" stroke="#7f858b" /><path d="M3 4h10v3H3z" fill="#eceeef" /><rect x="11.500" y="6" width="2" height="2" fill="#7ad61c" /><path d="M8 9v5M2 14.500h12" stroke="#19c07a" strokeWidth="2.400" /></>,
  disk: <><path d="M3 4h10l2.500 4v6H.5V8z" fill="#d4d6d8" stroke="#83888d" /><path d="M1 9h14v4H1z" fill="#b9bcbf" /><rect x="12" y="10" width="2" height="2" fill="#7ad61c" /></>,
  local: <><path d="M2 9h12l1.500 2v4H.5v-4z" fill="#7392a5" stroke="#51707f" /><path d="M3 4q2-2 4-1v3q-2-1-4 1z" fill="#ea5b2c" /><path d="M8 1q2-1 4 1v3q-2-1-4 0z" fill="#7cbb2f" /><path d="M3 8q2-1 4 0v2H3z" fill="#3f91dc" /><path d="M8 6q2 1 4 0v3H8z" fill="#fac52a" /></>,
  network: <><circle cx="6" cy="6" r="5" fill="#2f8fe0" /><path d="M2 4q3-3 5 0t-3 5z" fill="#54c254" /><rect x="7" y="4" width="8.500" height="8.500" fill="#1d2fc7" stroke="#8ca0c8" /><path d="M11 12.500v3M8 16h6" stroke="#98a5b5" /></>,
};
function TreeRow({ row }) {
  if (!row) return <div className="h-[21px] shrink-0" />;
  const [t, w, kind, lvl, open] = row;
  const sel = kind === "disk";
  return (
    <div className={`mr-[2px] ml-[2px] flex h-[21px] shrink-0 items-center ${sel ? "rounded-[2px] border border-[#d6d6d6] bg-gradient-to-b from-[#f8f8f8] to-[#e2e2e2]" : ""}`}>
      {lvl === 0 ? (
        <div className="ml-[9px] w-[9px] shrink-0">
          {open ? <Svg c="h-[6px] w-[6px]" vb="0 0 6 6"><path d="M6 0v6H0z" fill="#333" /></Svg> : <Svg c="h-[8px] w-[5px]" vb="0 0 5 8"><path d="M.5.5L4.500 4 .5 7.500z" stroke="#999" /></Svg>}
        </div>
      ) : (
        <div className={`w-[10px] shrink-0 ${sel ? "ml-[18px]" : "ml-[19px]"}`}>
          {lvl === 2 && <Svg c="h-[8px] w-[5px]" vb="0 0 5 8"><path d="M.5.5L4.500 4 .5 7.500z" stroke="#999" /></Svg>}
        </div>
      )}
      <Svg c="h-[16px] w-[16px]" vb="0 0 16 17">{treeArt[kind]}</Svg>
      <Fit w={w} className="ml-[4px]">{t}</Fit>
    </div>
  );
}

const SQL = ["Microsoft SQL Server Query File", 166, "sql"];
const TXT = ["Text Document", 81, "txt"];
const XLS = ["Microsoft Excel Worksheet", 139, "xls"];
const files = [
  ["change-request", 83, "08/19/2019 6:34 PM", TXT, "1 KB", 24],
  ["Geography_VintageYear_InvstGrp_FundName-ChangeScript", 315, "08/27/2019 9:48 PM", SQL, "11 KB", 30],
  ["GeographyChange", 99, "08/27/2019 8:44 PM", SQL, "4 KB", 24],
  ["ifc_mp_rpt_fnd_irr_cs_sum", 138, "08/27/2019 8:47 PM", SQL, "3 KB", 24],
  ["InvestmentGroupChange", 133, "08/27/2019 8:40 PM", SQL, "2 KB", 24],
  ["Script-Ref", 52, "08/05/2019 8:57 PM", TXT, "1 KB", 24],
  ["Script-Ref", 52, "08/06/2019 3:34 PM", XLS, "4,427 KB", 45],
  ["Script-Ref-uat", 74, "08/16/2019 5:56 PM", XLS, "4,466 KB", 45],
  ["sp_ifc_mp_fundInvestmentIRRGet_NPS_Multi_Quarter", 282, "08/27/2019 8:43 PM", SQL, "271 KB", 35],
  ["VintageYearChange", 104, "08/27/2019 8:38 PM", SQL, "3 KB", 24],
];
function FileIcon({ kind }) {
  return (
    <Svg c="h-[16px] w-[15px]" vb="0 0 15 16">
      {kind === "txt" && <><path d="M1 1h13v14.500H1z" fill="#fbfcfd" stroke="#a9b2ba" strokeWidth="0.900" /><path d="M3 4.500h9M3 6.500h9M3 8.500h9M3 10.500h9M3 12.500h9" stroke="#c3d3df" strokeWidth="0.900" /><path d="M2 1.500h11" stroke="#8b959d" strokeDasharray="1 1" /></>}
      {kind === "sql" && <><path d="M1 .5h7l3 3V14H1z" fill="#fff" stroke="#5a6f8e" strokeWidth="0.900" /><path d="M3 4h5M3 6h6M3 8h5M3 10h5M3 12h5" stroke="#4d6da5" strokeWidth="0.900" /><rect x="8" y="6" width="6.500" height="9.500" rx="2" fill="#f0b92c" stroke="#a87511" strokeWidth="0.700" /><path d="M10 8v6" stroke="#fbe9a6" strokeWidth="1.300" /></>}
      {kind === "xls" && <><path d="M4 .5h7l3.500 3v12H4z" fill="#fff" stroke="#8c9a92" strokeWidth="0.800" /><path d="M9 5h4M9 7.500h4M9 10h4M9 12.500h4" stroke="#4e9e6c" strokeDasharray="1.600 0.800" /><path d="M0 2.500h8v11H0z" fill="#1e7145" /><path d="M2 5l4 6M6 5l-4 6" stroke="#fff" strokeWidth="1.200" /></>}
    </Svg>
  );
}

function Explorer7Window() {
  return (
    <>
      <div className="flex h-[23px] shrink-0 items-center bg-white pt-[1px] text-[#8f8f8f]">
        <Cubes c="ml-[3px] h-[12px] w-[14px]" />
        <Fit w={111} className="ml-[6px]">Amazon WorkSpaces</Fit>
        <Screens dark c="mt-[-3px] ml-[1590px] h-[10px] w-[16px]" />
        <div className="mt-[-3px] ml-[59px] h-px w-[10px] shrink-0 bg-[#888]" />
        <Restore c="mt-[-3px] ml-[35px] h-[10px] w-[10px]" />
        <Cross c="mt-[-3px] ml-[36px] h-[10px] w-[10px]" />
      </div>
      <div className="flex h-[23px] shrink-0 items-center border-b-2 border-[#3a3e45] bg-white text-[13px] text-[#9a9a9a]">
        <Fit w={125} className="ml-[8px]">Amazon WorkSpaces</Fit>
        <Fit w={88} className="ml-[18px]">My WorkSpace</Fit>
        <Fit w={65} className="ml-[18px]">Connection</Fit>
        <Fit w={27} className="ml-[16px]">View</Fit>
      </div>
      <div className="flex h-[55px] shrink-0 flex-col bg-gradient-to-b from-[#97b1cf] via-[#b7cfe9] via-45% to-[#bbd1ec]">
        <div className="flex h-[20px] justify-end gap-[2px] pt-[1px] pr-[2px]">
          <div className="flex h-[17px] w-[31px] items-center justify-center rounded-[2px] border border-[#5f7593] bg-gradient-to-b from-[#c6d8ec] from-50% to-[#9db7d4] to-50%"><div className="mt-[4px] h-[5px] w-[11px] rounded-[1px] border border-[#445] bg-white" /></div>
          <div className="flex h-[17px] w-[31px] items-center justify-center rounded-[2px] border border-[#5f7593] bg-gradient-to-b from-[#c6d8ec] from-50% to-[#9db7d4] to-50% text-[#334]"><Restore c="h-[10px] w-[11px]" /></div>
          <div className="flex h-[17px] w-[31px] items-center justify-center rounded-[2px] border border-[#5b1414] bg-gradient-to-b from-[#dd8a80] from-50% to-[#c03c28] to-50% text-white"><Cross c="h-[8px] w-[10px]" sw={4} /></div>
        </div>
        <div className="flex h-[35px] items-center pb-[1px]">
          <div className="ml-[3px] flex h-[25px] w-[25px] shrink-0 items-center justify-center rounded-full border border-[#2a456f] bg-gradient-to-b from-[#6f9be0] via-[#0f3f9c] to-[#1c9be8] text-white"><Arrow c="h-[12px] w-[16px]" /></div>
          <div className="ml-[3px] flex h-[24px] w-[24px] shrink-0 items-center justify-center rounded-full border border-[#7f93ae] bg-gradient-to-b from-[#dde8f4] to-[#a9c0dc] text-[#eef4fb]"><Arrow c="h-[12px] w-[14px]" r="rotate-180" /></div>
          <Tri c="ml-[4px] h-[5px] w-[8px] text-[#1a5c96]" />
          <div className="ml-[4px] flex h-[22px] w-[1599px] shrink-0 items-center border border-[#6a8099] bg-[#e9f0f9]">
            <Folder7 c="ml-[3px] h-[16px] w-[13px]" />
            {crumbs.map(([t, w], i) => (
              <div key={t} className="flex shrink-0 items-center">
                <Tri c={`h-[7px] w-[4px] text-black ${i === 0 ? "ml-[9px]" : "ml-[9px]"}`} d="right" />
                <Fit w={w} className="ml-[9px]">{t}</Fit>
              </div>
            ))}
            <Tri c="ml-auto h-[4px] w-[7px] text-[#0a1a5c]" />
            <div className="ml-[5px] flex h-full w-[25px] items-center justify-center border-l border-[#8398b0]">
              <Svg c="h-[12px] w-[14px]" vb="0 0 14 12"><path d="M5 0L0 6h3l1 3 1-3h2l-3-1zM9 12l5-6h-3l-1-3-1 3H7l3 1z" fill="#2478c5" /></Svg>
            </div>
          </div>
          <div className="ml-[7px] flex h-[22px] w-[242px] shrink-0 items-center border border-[#6a8099] bg-[#e9f0f9]">
            <Fit w={81} className="ml-[8px] italic text-[#6d6d6d]">Search Phase-II</Fit>
            <Magnifier c="mr-[5px] ml-auto h-[12px] w-[13px] text-[#2c7fc2]" />
          </div>
        </div>
      </div>
      <div className="flex h-[32px] shrink-0 items-center border-t border-b border-[#9fb6d3] bg-gradient-to-b from-white via-[#e9f3fb] via-50% to-[#dce6f4] to-52% text-[#1e395b]">
        <Fit w={48} className="ml-[18px]">Organize</Fit><Tri c="ml-[5px] h-[4px] w-[8px]" />
        <Fit w={88} className="ml-[30px]">Include in library</Fit><Tri c="ml-[6px] h-[4px] w-[8px]" />
        <Fit w={55} className="ml-[30px]">Share with</Fit><Tri c="ml-[6px] h-[4px] w-[8px]" />
        <Fit w={58} className="ml-[31px]">New folder</Fit>
        <ListIcon c="mr-[10px] ml-auto h-[13px] w-[15px]" /><Tri c="h-[4px] w-[8px]" />
        <Svg c="ml-[22px] h-[14px] w-[16px]" vb="0 0 16 14"><rect x=".5" y=".5" width="15" height="13" fill="#fff" stroke="#4d6d8d" /><path d="M0 1h16" stroke="#4d6d8d" strokeWidth="2" /><path d="M10 2h5v11h-5z" fill="#7fd7ee" stroke="#4d6d8d" strokeWidth="0.600" /></Svg>
        <div className="mr-[15px] ml-[20px] flex size-[16px] items-center justify-center rounded-full border border-[#7b86a6] bg-gradient-to-b from-[#5b7be0] to-[#1530a0] text-[12px] font-bold text-white">?</div>
      </div>
      <div className="flex h-[814px] shrink-0 bg-[#fcfcfc]">
        <div className="flex w-[192px] shrink-0 flex-col overflow-hidden border-r border-[#d9e5f3] pt-[10px]">
          {tree.map((r, i) => <TreeRow key={i} row={r} />)}
        </div>
        <div className="flex flex-col">
          <div className="relative flex h-[27px] items-center text-[#4c607a]">
            <Tri c="absolute top-[1px] left-[183px] h-[4px] w-[7px] text-[#6fa3c8]" d="up" />
            <div className="h-full w-[361px] border-r border-[#e3eaf3] pt-[7px] pl-[19px]"><Fit w={31}>Name</Fit></div>
            <div className="h-full w-[118px] border-r border-[#e3eaf3] pt-[7px] pl-[7px]"><Fit w={75}>Date modified</Fit></div>
            <div className="h-full w-[180px] border-r border-[#e3eaf3] pt-[7px] pl-[7px]"><Fit w={26}>Type</Fit></div>
            <div className="h-full w-[80px] border-r border-[#e3eaf3] pt-[7px] pl-[6px]"><Fit w={20}>Size</Fit></div>
          </div>
          <div className="mt-[4px] ml-[15px] flex w-[720px] flex-col">
            {files.map(([n, w, d, [type, tw, kind], size, sw], i) => (
              <div key={i} className={`flex h-[21px] items-center rounded-[2px] text-[#6d6d6d] outline-1 ${i === 0 ? "outline-[#7da2ce]" : "outline-transparent"}`}>
                <div className="ml-[4px]"><FileIcon kind={kind} /></div>
                <div className="ml-[5px] w-[328px] text-black"><Fit w={w}>{n}</Fit></div>
                <div className="w-[118px]"><Fit w={104}>{d}</Fit></div>
                <Fit w={tw}>{type}</Fit>
                <div className="ml-auto mr-[4px]"><Fit w={sw}>{size}</Fit></div>
              </div>
            ))}
          </div>
        </div>
      </div>
      <div className="flex h-[53px] shrink-0 border-t-2 border-[#cfdaea] bg-[#f0f4fc] text-[#1e395b]">
        <Svg c="mt-[3px] ml-[20px] h-[42px] w-[36px]" vb="0 0 36 42"><path d="M8 3l19 2v22l4 3-1 9-22 1z" fill="#edd27c" /><path d="M1 1l10 4v34l-2 3-8-4z" fill="#fbeeb2" stroke="#dcc06c" strokeWidth="0.700" /><path d="M25 30l4-4 1 11-4 3z" fill="#cfe6f7" /><path d="M30 36l6-6-2 7z" fill="#d0d0d0" opacity="0.700" /></Svg>
        <Fit w={48} className="mt-[8px] ml-[23px]">10 items</Fit>
      </div>
    </>
  );
}

const Scissors = ({ c }) => (
  <Svg c={c} vb="0 0 32 32"><ellipse cx="12" cy="10" rx="10" ry="8.500" fill="#fff" stroke="#d23a3a" strokeWidth="2.600" /><path d="M8 4l12 17M17 3l-1 18" stroke="#8b98a5" strokeWidth="2.400" /><ellipse cx="17" cy="26" rx="2.600" ry="4.500" stroke="#2a86c8" strokeWidth="2.600" /><ellipse cx="26" cy="23" rx="3" ry="4" stroke="#2a86c8" strokeWidth="2.600" transform="rotate(-35 26 23)" /></Svg>
);
const Ssms = ({ c }) => (
  <Svg c={c} vb="0 0 32 32"><rect x="2" y="1" width="9" height="13" rx="3" fill="#eab02a" stroke="#a67814" /><path d="M15 3h11v12M2 18v9h8" stroke="#3d8f3d" strokeWidth="2" strokeDasharray="3 2" /><path d="M12 30l14-14M13 16l14 14" stroke="#7a828a" strokeWidth="3" /><path d="M14 14l8 2-5 5z" fill="#aab2ba" /><path d="M24 26l4 4" stroke="#e0a92a" strokeWidth="3" /></Svg>
);
const Excel = ({ c }) => (
  <Svg c={c} vb="0 0 32 30"><path d="M17 4h14v22H17z" fill="#fff" stroke="#1e7145" strokeWidth="1.600" /><path d="M20 8h9M20 12h9M20 16h9M20 20h9" stroke="#1e7145" strokeWidth="2" strokeDasharray="4 1" /><path d="M0 3l18-3v30L0 27z" fill="#1e7145" /><path d="M5 9l7 12M12 9L5 21" stroke="#fff" strokeWidth="2.600" /></Svg>
);
const VsMark = ({ c, tile }) => (
  <Svg c={c} vb="0 0 32 32">{tile ? <><rect width="32" height="32" fill="#68217a" /><path d="M22 5l5 3v16l-5 3L12 18l-5 4-2-1V11l2-1 5 4zM22 12l-6 4 6 4zM8 13v6l3-3z" fill="#fff" fillRule="evenodd" /></> : <><path d="M22 0l9 3v26l-9 3L1 27v-3l21 3z" fill="#865fc5" /><path d="M2 9l3-1 4 4 8-7 3 1v16l-3 1-8-7-4 4-3-1zM17 10l-5 4 5 4zM4 12v5l3-2.500z" fill="#8d69cc" fillRule="evenodd" /></>}</Svg>
);
const Disc = ({ c }) => (
  <Svg c={c} vb="0 0 32 32"><circle cx="16" cy="16" r="15" fill="#20242a" /><path d="M2 14A14 14 0 0 1 15 2l1 6-8 8z" fill="#d8232a" /><path d="M30 18a14 14 0 0 1-13 12l-1-6 8-8z" fill="#2a6fe0" /><circle cx="16" cy="16" r="8" fill="#c9ccd0" stroke="#777" /><circle cx="16" cy="16" r="2.600" fill="#777" /></Svg>
);
const Notepad7 = ({ c }) => (
  <Svg c={c} vb="0 0 32 32"><path d="M9 2l20 3-4 26-23-5z" fill="#8fc9d8" stroke="#5d8a98" /><path d="M9 2l20 3-.5 3L8 5z" fill="#e8eef0" /><path d="M29 6l2 24-6 1z" fill="#a0894a" /></Svg>
);

function Win7Bar() {
  const apps = [
    [<Chrome c="h-[30px] w-[30px]" />], [<Explorer7 c="h-[30px] w-[32px]" />, "act"], [<Outlook13 c="h-[30px] w-[30px]" />, "st"], [<Scissors c="h-[30px] w-[30px]" />], [<Ssms c="h-[32px] w-[32px]" />],
    [<IE c="h-[30px] w-[30px]" />, "st"], [<Excel c="h-[30px] w-[30px]" />, "st"], [<Skype ring c="h-[31px] w-[31px]" />, "st"], [<VsMark tile c="h-[32px] w-[32px]" />], [<Npp c="h-[32px] w-[32px]" />],
    [<Disc c="h-[31px] w-[31px]" />], [<VsMark c="h-[32px] w-[32px]" />], [<Firefox c="h-[30px] w-[30px]" />], [<Notepad7 c="h-[29px] w-[30px]" />],
  ];
  return (
    <div className="flex h-[40px] shrink-0 items-center border-t border-[#3a4658] bg-[#a7c0dd]">
      <div className="flex h-full w-[59px] items-center bg-[#8093ab] pl-[9px]">
        <div className="flex h-[36px] w-[36px] items-center justify-center rounded-full border border-[#254a70] bg-gradient-to-b from-[#6f8fb5] via-[#1e4f86] to-[#2fb5e8]">
          <Svg c="h-[22px] w-[26px]" vb="0 0 24 20"><path d="M1 4q5-3 10-1l-1 7q-5-2-10 1z" fill="#ee5a24" /><path d="M12 3q5 2 11-1l-2 8q-5 2-10 0z" fill="#8cc63e" /><path d="M0 12q5-3 10-1l-1 7q-5-2-9 1z" fill="#3fa7f0" /><path d="M11 11q5 2 10 0l-2 8q-5 1-9-1z" fill="#fcc92c" /></Svg>
        </div>
      </div>
      <div className="ml-[1px] flex gap-[2px]">
        {apps.map(([icon, kind], i) => (
          <div key={i} className={`flex h-[38px] w-[60px] items-center justify-center rounded-[3px] border border-[#56688a] shadow-[inset_0_0_0_1px_rgba(255,255,255,0.6)] ${kind === "act" ? "bg-gradient-to-br from-white to-[#efe6c4]" : "bg-gradient-to-b from-[#d3dff0] to-[#a9bddb]"}`}>
            <div className={`flex h-full items-center justify-center ${kind === "st" ? "mr-[4px] w-[52px] border-r border-[#56688a]" : ""}`}>{icon}</div>
          </div>
        ))}
      </div>
      <div className="ml-auto flex h-full w-[231px] items-center bg-gradient-to-r from-transparent to-[#8093ab] to-14% text-white">
        <Tri c="ml-[45px] h-[5px] w-[9px]" d="up" />
        <Outlook13 c="ml-[12px] h-[16px] w-[16px]" />
        <Skype badge c="ml-[9px] h-[16px] w-[16px]" />
        <Svg c="ml-[8px] h-[15px] w-[16px]" vb="0 0 16 15"><rect x="4" y="3" width="11" height="8" fill="#567" stroke="#fff" /><path d="M2 0v8M0 3h4M9 11v3M6 14h7" stroke="#fff" strokeWidth="1.500" /></Svg>
        <div className="ml-[17px] flex w-[59px] flex-col items-center gap-[6px]">
          <Fit w={43}>3:18 PM</Fit>
          <Fit w={59}>08/28/2019</Fit>
        </div>
        <div className="ml-auto h-full w-[15px] border border-[#4a5a70] bg-gradient-to-b from-[#b6c2d2] to-[#64748a]" />
      </div>
    </div>
  );
}

function SmallBar() {
  return (
    <div className="flex h-[40px] shrink-0 items-center bg-[#060c14] text-white">
      <div className="w-[51px] pl-[16px]"><WinLogo c="h-[16px] w-[16px]" /></div>
      <Tile small line><Explorer c="h-[19px] w-[22px]" /></Tile>
      <Tile small line><Chrome c="h-[22px] w-[22px]" /></Tile>
      <Tile small line><Cubes c="h-[19px] w-[22px]" /></Tile>
      <Tile small><Outlook c="h-[22px] w-[24px]" /></Tile>
      <Tile small><IE c="h-[23px] w-[23px]" /></Tile>
      <Tile small line><UiTile c="h-[24px] w-[24px] text-[20px]" /></Tile>
      <Tile small line><Npp c="h-[23px] w-[23px]" /></Tile>
      <Tile small line><UiTile light c="h-[24px] w-[24px] border-2 text-[19px]" /></Tile>
      <Tile small line active><Firefox c="h-[23px] w-[22px]" /></Tile>
      <div className="mr-[6px] ml-auto flex flex-col items-end gap-[6px]">
        <Fit w={26} className="mr-[16px]">15:18</Fit>
        <Fit w={58}>28-08-2019</Fit>
      </div>
    </div>
  );
}

function RightScreen() {
  return (
    <div className={`flex h-[1080px] w-[1920px] shrink-0 flex-col overflow-hidden bg-white text-[12px] leading-none text-black ${SEGOE}`}>
      <Explorer7Window />
      <Win7Bar />
      <SmallBar />
    </div>
  );
}

export default function App() {
  return (
    <div className="flex h-[1080px] w-[3840px] overflow-hidden">
      <LeftScreen />
      <RightScreen />
    </div>
  );
}
